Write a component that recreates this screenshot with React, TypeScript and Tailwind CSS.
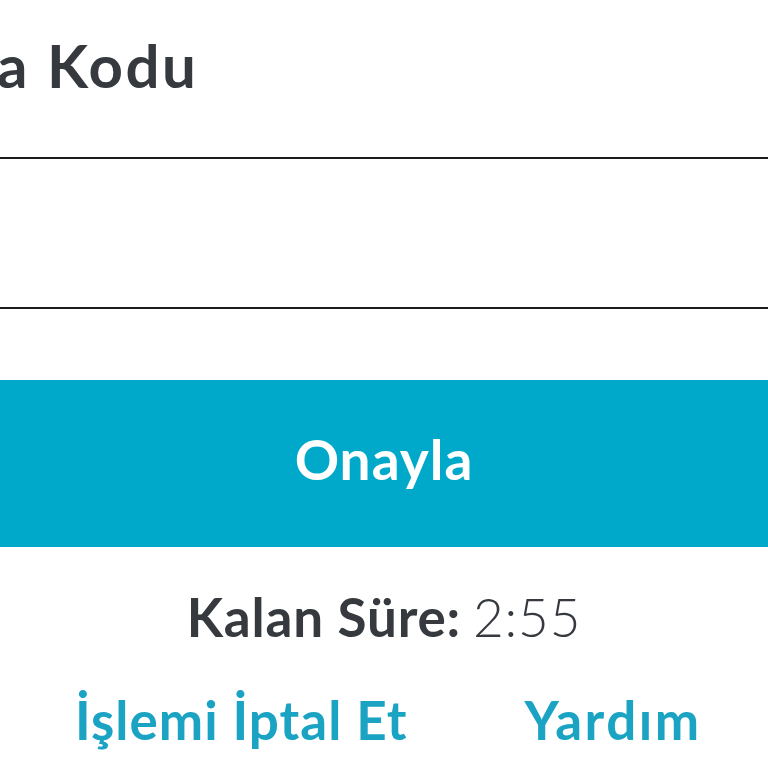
const App = () => {
  return (
    <div
      className="w-[768px] h-[768px] overflow-hidden bg-white"
      style={{ fontFamily: "Lato, 'Open Sans', sans-serif" }}
    >
      <div className="h-[157px] pt-[25px]">
        <h1 className="-ml-[3px] text-[60px] leading-[80px] font-bold tracking-[2.5px] text-[#363a3f]">
          a Kodu
        </h1>
      </div>
      <div className="h-[2px] bg-[#1c1c1c]" />
      <div className="h-[148px]" />
      <div className="h-[2px] bg-[#1c1c1c]" />
      <div className="h-[71px]" />
      <button className="w-full h-[167px] pb-[8px] bg-[#00a9c9] text-white text-[55px] font-bold tracking-[1px] flex items-center justify-center">
        Onayla
      </button>
      <div className="mt-[40px] flex items-baseline justify-center gap-3 text-[#363a3f] text-[53px] leading-[60px] tracking-[0.8px]">
        <span className="font-bold">Kalan Süre:</span>
        <span className="font-light">2:55</span>
      </div>
      <div className="mt-[43px] flex items-baseline pl-[75px] gap-[117px] text-[#1aa3c3] text-[53px] leading-[60px] font-bold tracking-[1px]">
        <a>İşlemi İptal Et</a>
        <a className="tracking-[2.5px]">Yardım</a>
      </div>
    </div>
  );
};

export default App;
